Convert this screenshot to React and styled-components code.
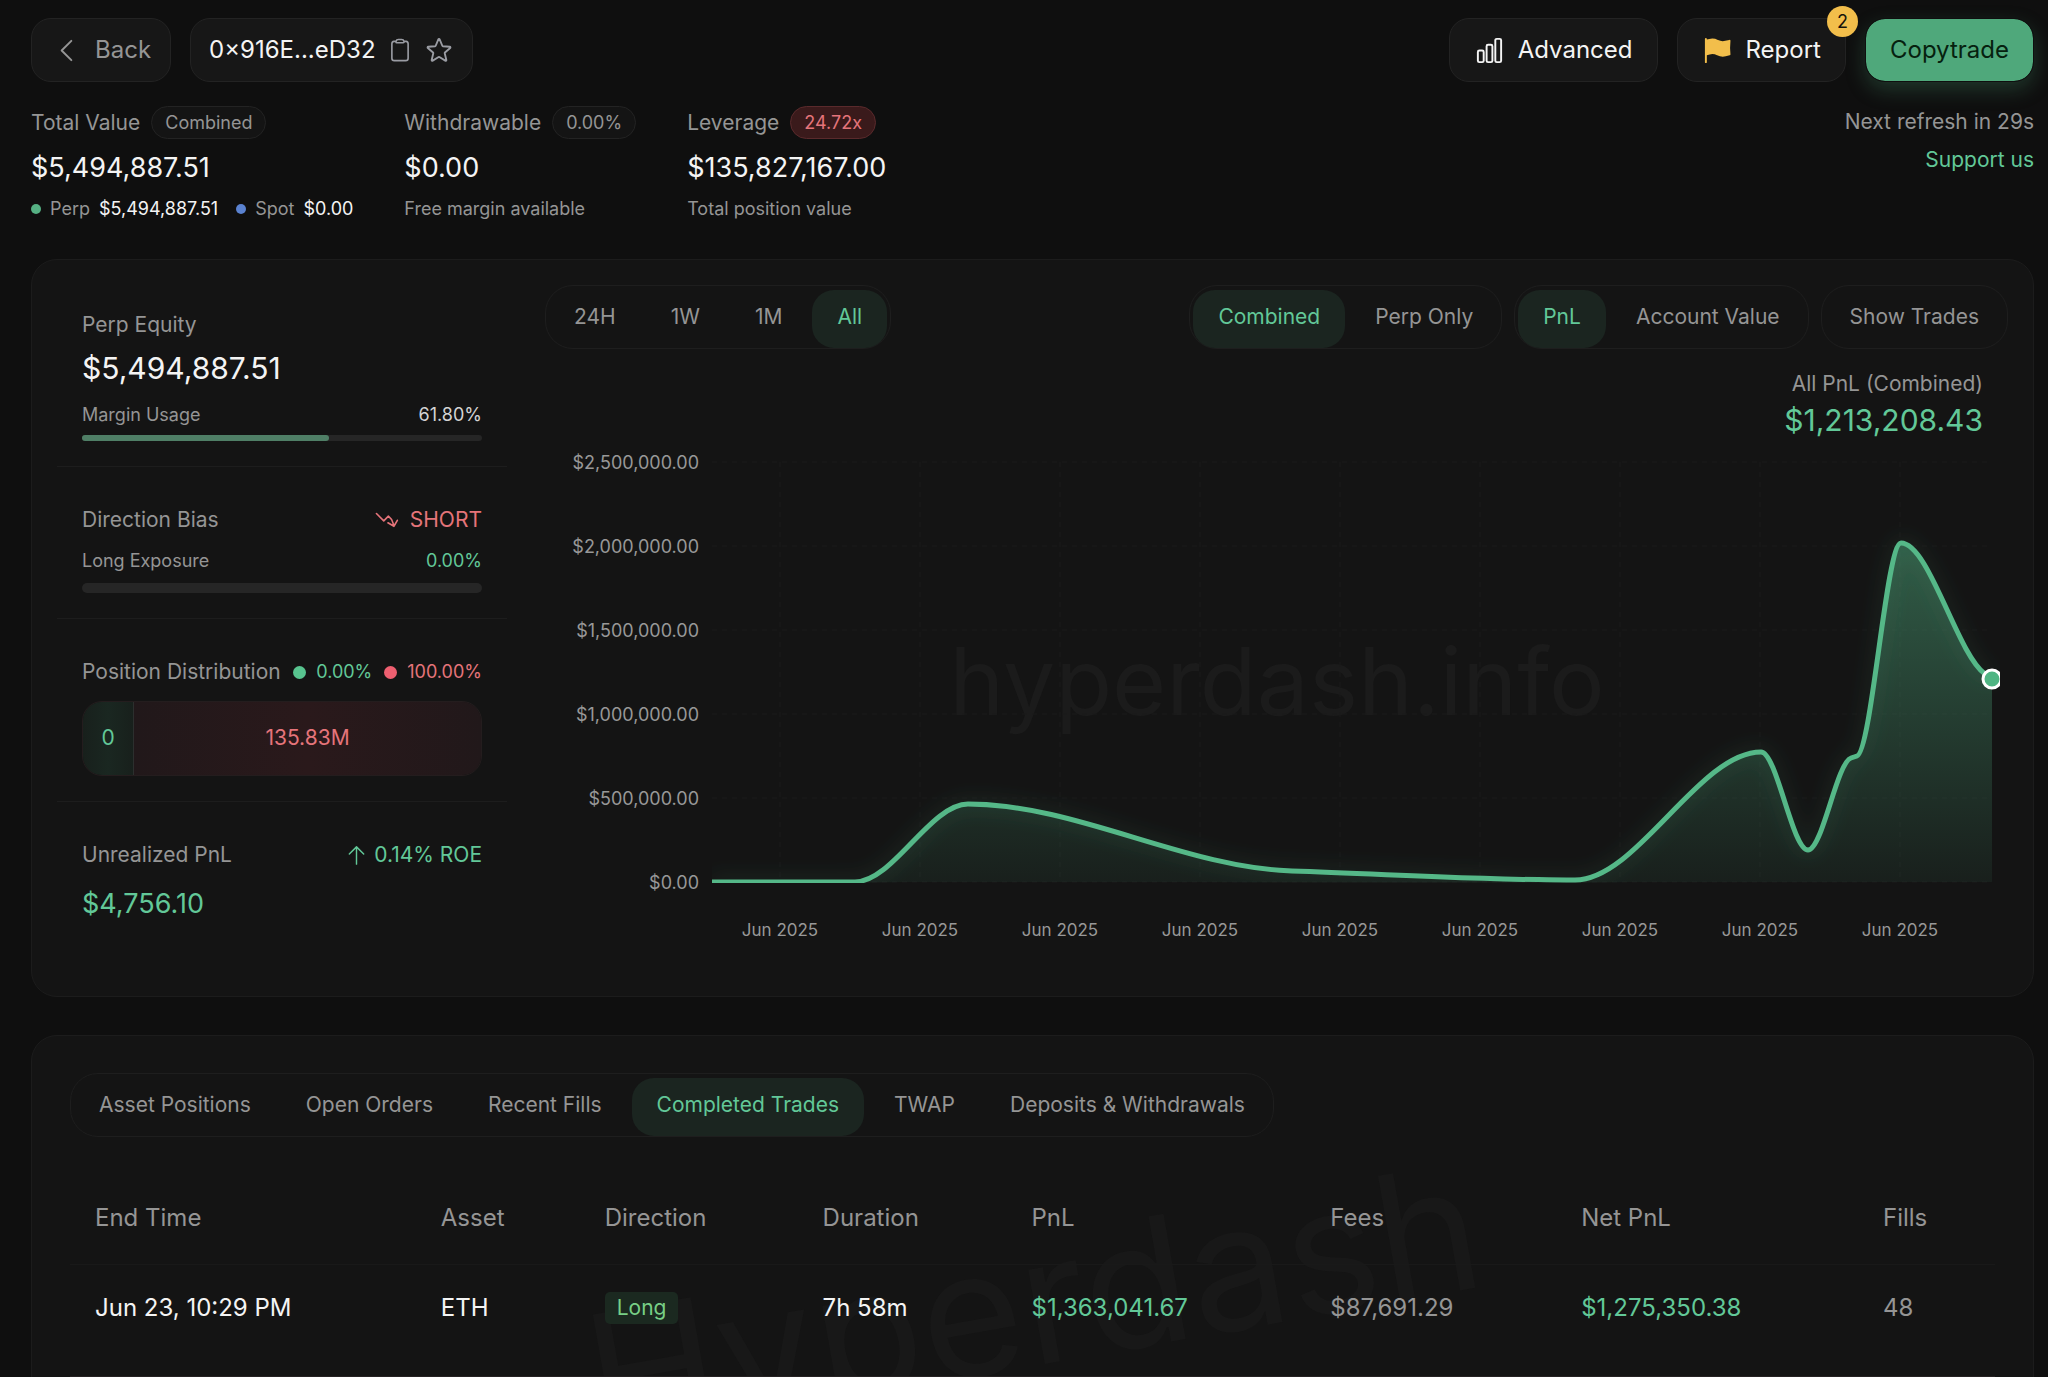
import React, { useState } from 'react';
import styled, { createGlobalStyle, css } from 'styled-components';
import {
  HiFlag,
  HiOutlineArrowTrendingDown,
  HiOutlineArrowUp,
  HiOutlineChartBar,
  HiOutlineChevronLeft,
  HiOutlineClipboard,
  HiOutlineStar,
} from 'react-icons/hi2';

const GlobalStyle = createGlobalStyle`
  * {
    box-sizing: border-box;
  }

  body {
    margin: 0;
    background: #0f0f0f;
    color: #f4f4f4;
    font-family: Inter, 'Liberation Sans', sans-serif;
    font-size: 21px;
    line-height: 28px;
  }

  button {
    font: inherit;
    color: inherit;
    cursor: pointer;
  }
`;

const tones = {
  muted: '#959595',
  light: '#d4d4d4',
  white: '#f4f4f4',
  green: '#62c898',
  red: '#e5747a',
};

const Page = styled.main`
  display: flex;
  flex-direction: column;
  gap: 38px;
  height: 100vh;
  overflow: hidden;
  padding: 18px 14px 0 31px;
`;

const TopArea = styled.div`
  display: flex;
  flex-direction: column;
  gap: 24px;
`;

const Header = styled.header`
  display: flex;
  justify-content: space-between;
`;

const HeaderGroup = styled.div`
  display: flex;
  gap: 19px;
`;

const panelButton = css`
  position: relative;
  display: flex;
  align-items: center;
  gap: 13px;
  height: 64px;
  border: 1px solid #232323;
  border-radius: 20px;
  background: #171717;
  font-size: 24px;
`;

const BackButton = styled.button`
  ${panelButton}
  padding: 0 19px;
  color: ${tones.muted};
`;

const AddressBox = styled.div`
  ${panelButton}
  gap: 11px;
  padding: 0 18px;
`;

const IconButton = styled.button`
  display: flex;
  padding: 0;
  border: 0;
  background: none;
  color: #9a9ca3;
`;

const ActionButton = styled.button`
  ${panelButton}
  padding: 0 24px;
`;

const CopytradeButton = styled(ActionButton)`
  border-color: #0f0f0f;
  background: #4fa87b;
  background-clip: padding-box;
  color: #06210f;
  box-shadow: 0 8px 20px rgba(79, 168, 123, 0.25);
`;

const CountBadge = styled.span`
  position: absolute;
  top: -13px;
  right: -13px;
  width: 31px;
  height: 31px;
  border-radius: 50%;
  background: #f2be4b;
  color: #17130a;
  font-size: 18px;
  line-height: 31px;
  text-align: center;
`;

const StatsRow = styled.section`
  display: flex;
  gap: 51px;
`;

const Stat = styled.div`
  display: flex;
  flex-direction: column;
  gap: 11px;
`;

const StatHead = styled.div`
  display: flex;
  align-items: center;
  gap: 11px;
  height: 33px;
  color: ${tones.muted};
`;

const Chip = styled.span`
  padding: 0 13px;
  border: 1px solid ${props => (props.$danger ? '#5a2a2c' : '#232323')};
  border-radius: 17px;
  background: ${props => (props.$danger ? '#3a1a1b' : '#141414')};
  color: ${props => (props.$danger ? tones.red : tones.muted)};
  font-size: 18px;
  line-height: 31px;
`;

const StatValue = styled.div`
  font-size: 27px;
  line-height: 36px;
`;

const StatNote = styled.div`
  display: flex;
  align-items: center;
  gap: 10px;
  color: ${tones.muted};
  font-size: 18px;
  line-height: 24px;
`;

const StatPart = styled.span`
  display: flex;
  align-items: center;
  gap: 9px;
  margin-right: 8px;

  &:last-child {
    margin-right: 0;
  }

  strong {
    color: ${tones.white};
    font-weight: 400;
  }
`;

const Dot = styled.i`
  width: ${props => props.$size}px;
  height: ${props => props.$size}px;
  border-radius: 50%;
  background: ${props => props.$color};
`;

const RefreshInfo = styled.div`
  display: flex;
  flex-direction: column;
  align-items: flex-end;
  gap: 10px;
  margin-left: auto;
  padding-top: 2px;
  color: ${tones.muted};
`;

const SupportLink = styled.a`
  color: ${tones.green};
  text-decoration: none;
`;

const Card = styled.section`
  position: relative;
  flex: none;
  border: 1px solid #1c1c1c;
  border-radius: 26px;
  background: #141414;
`;

const OverviewCard = styled(Card)`
  display: flex;
  gap: 38px;
  padding: 25px;
`;

const Sidebar = styled.aside`
  flex: none;
  width: 450px;
`;

const SideSection = styled.div`
  display: flex;
  flex-direction: column;
  padding: 39px 25px 25px;
  border-bottom: 1px solid #1d1d1d;

  &:first-child {
    padding-top: 26px;
  }

  &:last-child {
    border-bottom: 0;
  }
`;

const Row = styled.div`
  display: flex;
  align-items: center;
  justify-content: space-between;
  color: ${tones.muted};
`;

const SmallRow = styled(Row)`
  margin: 15px 0 ${props => props.$gap}px;
  font-size: 18px;
  line-height: 24px;
`;

const Tone = styled.span`
  display: flex;
  align-items: center;
  gap: ${props => props.$gap || 10}px;
  color: ${props => tones[props.$tone]};
`;

const BigValue = styled.div`
  margin-top: 9px;
  font-size: 30px;
  line-height: 40px;
`;

const PnlValue = styled.div`
  margin-top: 17px;
  color: ${tones.green};
  font-size: 27px;
  line-height: 36px;
`;

const Track = styled.div`
  height: ${props => props.$height}px;
  border-radius: 5px;
  background: #262626;
`;

const Fill = styled.div`
  height: 100%;
  border-radius: 5px;
  background: #4f7f66;
`;

const Legend = styled.div`
  display: flex;
  gap: 12px;
  font-size: 18px;
`;

const Distribution = styled.div`
  display: flex;
  height: 75px;
  margin-top: 15px;
  border: 1px solid #241d1e;
  border-radius: 20px;
  overflow: hidden;
  line-height: 72px;
  text-align: center;
`;

const LongShare = styled.div`
  width: 51px;
  border-right: 1px solid #2c2f2e;
  background: linear-gradient(90deg, #18201c, #1a2721, #18201c);
  color: ${tones.green};
`;

const ShortShare = styled.div`
  flex: 1;
  background: linear-gradient(90deg, #21181a, #2a191b, #21181a);
  color: ${tones.red};
`;

const ChartColumn = styled.div`
  flex: 1;
  min-width: 0;
`;

const Toolbar = styled.div`
  display: flex;
  gap: 12px;
  height: 64px;

  > :first-child {
    margin-right: auto;
  }
`;

const Segments = styled.div`
  display: flex;
  gap: 5px;
  width: fit-content;
  height: 64px;
  padding: 4px 3px 0;
  border: 1px solid #1e1e1e;
  border-radius: 28px;
`;

const Segment = styled.button`
  padding: 0 25px 4px;
  border: 0;
  border-radius: 22px;
  background: ${props => (props.$active ? '#1b2520' : 'transparent')};
  color: ${props => (props.$active ? tones.green : tones.muted)};
  white-space: nowrap;
`;

const Readout = styled.div`
  display: flex;
  flex-direction: column;
  align-items: flex-end;
  gap: 2px;
  padding: 21px 25px 0 0;
  color: ${tones.muted};

  strong {
    color: ${tones.green};
    font-size: 30px;
    font-weight: 400;
    line-height: 40px;
  }
`;

const ChartSvg = styled.svg`
  display: block;
  width: 100%;
  height: auto;

  text {
    fill: #989898;
    font-size: 18px;
  }

  .date {
    font-size: 17px;
  }

  .watermark {
    fill: #1b1b1b;
    font-size: 93px;
  }
`;

const TradesCard = styled(Card)`
  padding: 37px 38px;
  overflow: hidden;
`;

const TradesWatermark = styled.div`
  position: absolute;
  top: 165px;
  left: 50%;
  color: #181818;
  font-size: 175px;
  line-height: 200px;
  transform: translateX(-50%) rotate(-10deg);
  pointer-events: none;
`;

const Table = styled.table`
  position: relative;
  width: 100%;
  margin-top: 35px;
  border-collapse: collapse;
  table-layout: fixed;
  font-size: 24px;

  th,
  td {
    padding: 0 25px;
    border-bottom: 1px solid #191919;
    font-weight: 400;
    text-align: left;
    white-space: nowrap;
  }

  th {
    height: 92px;
    color: ${tones.muted};
  }

  td {
    height: 112px;
    padding-bottom: 25px;
    border-bottom-color: #262223;
  }
`;

const Cell = styled.td`
  color: ${props => tones[props.$tone]};
`;

const DirectionTag = styled.span`
  display: inline-block;
  padding: 0 12px;
  border-radius: 5px;
  background: #1b2920;
  color: #78cf86;
  font-size: 21px;
  line-height: 32px;
`;

function SegmentedControl({ options, initial }) {
  const [selected, setSelected] = useState(initial);

  return (
    <Segments>
      {options.map(option => (
        <Segment
          key={option}
          $active={option === selected}
          aria-pressed={option === selected}
          onClick={() => setSelected(option)}
        >
          {option}
        </Segment>
      ))}
    </Segments>
  );
}

const pnlPoints = [
  [167, 442],
  [310, 442],
  [423, 364],
  [747, 431],
  [1030, 440],
  [1216, 312],
  [1263, 410],
  [1306, 318],
  [1312, 316],
  [1356, 103],
  [1440, 234],
  [1447, 239],
];

const yTicks = ['$2,500,000.00', '$2,000,000.00', '$1,500,000.00', '$1,000,000.00', '$500,000.00', '$0.00'];
const xTicks = Array.from({ length: 9 }, (_, i) => 235 + i * 140);

// monotone cubic through the points, so the line never overshoots a value
function monotonePath(points) {
  const secants = points.slice(1).map(([x, y], i) => (y - points[i][1]) / (x - points[i][0]));
  const slopes = points.map((_, i) => {
    if (i === 0) return secants[0];
    if (i === points.length - 1) return secants[i - 1];
    const before = secants[i - 1];
    const after = secants[i];
    if (before * after <= 0) return 0;
    return Math.sign(before) * Math.min(Math.abs(before), Math.abs(after));
  });

  return points.slice(1).reduce((path, [x, y], i) => {
    const [px, py] = points[i];
    const third = (x - px) / 3;
    return `${path}C${px + third},${py + third * slopes[i]} ${x - third},${y - third * slopes[i + 1]} ${x},${y}`;
  }, `M${points[0][0]},${points[0][1]}`);
}

function PnlChart() {
  const line = monotonePath(pnlPoints);

  return (
    <ChartSvg viewBox="0 0 1463 531" role="img" aria-label="All PnL (Combined)">
      <defs>
        <linearGradient id="pnlFill" x1="0" y1="103" x2="0" y2="442" gradientUnits="userSpaceOnUse">
          <stop offset="0" stopColor="#55b888" stopOpacity="0.44" />
          <stop offset="1" stopColor="#55b888" stopOpacity="0.07" />
        </linearGradient>
        <clipPath id="plotClip">
          <rect x="167" y="0" width="1288" height="443" />
        </clipPath>
        <filter id="lineGlow" x="-10%" y="-20%" width="120%" height="140%">
          <feDropShadow dx="0" dy="0" stdDeviation="10" floodColor="#55b888" floodOpacity="0.25" />
        </filter>
      </defs>

      <text className="watermark" x="732" y="275" textAnchor="middle">hyperdash.info</text>

      {yTicks.map((label, i) => (
        <g key={label}>
          <line x1="167" x2="1447" y1={22 + i * 84} y2={22 + i * 84} stroke="#1b1b1b" strokeDasharray="5 5" />
          <text x="154" y={29 + i * 84} textAnchor="end">{label}</text>
        </g>
      ))}
      {xTicks.map(x => (
        <g key={x}>
          <line x1={x} x2={x} y1="22" y2="442" stroke="#1b1b1b" strokeDasharray="5 5" />
          <text className="date" x={x} y="496" textAnchor="middle">Jun 2025</text>
        </g>
      ))}

      <g clipPath="url(#plotClip)">
        <path d={`${line}L1447,442L167,442Z`} fill="url(#pnlFill)" />
        <path d={line} fill="none" stroke="#55b888" strokeWidth="5" filter="url(#lineGlow)" />
        <circle cx="1447" cy="239" r="9" fill="#4fb583" stroke="#fff" strokeWidth="3" />
      </g>
    </ChartSvg>
  );
}

const columns = [
  ['End Time', 346],
  ['Asset', 164],
  ['Direction', 218],
  ['Duration', 209],
  ['PnL', 299],
  ['Fees', 251],
  ['Net PnL', 302],
  ['Fills', 137],
];
const totalWidth = columns.reduce((sum, [, width]) => sum + width, 0);

const trades = [
  {
    endTime: 'Jun 23, 10:29 PM',
    asset: 'ETH',
    direction: 'Long',
    duration: '7h 58m',
    pnl: '$1,363,041.67',
    fees: '$87,691.29',
    netPnl: '$1,275,350.38',
    fills: 48,
  },
];

function TradesTable() {
  return (
    <Table>
      <colgroup>
        {columns.map(([name, width]) => (
          <col key={name} style={{ width: `${(width / totalWidth) * 100}%` }} />
        ))}
      </colgroup>
      <thead>
        <tr>
          {columns.map(([name]) => (
            <th key={name} scope="col">{name}</th>
          ))}
        </tr>
      </thead>
      <tbody>
        {trades.map(trade => (
          <tr key={trade.endTime}>
            <Cell $tone="white">{trade.endTime}</Cell>
            <Cell $tone="white">{trade.asset}</Cell>
            <Cell $tone="green"><DirectionTag>{trade.direction}</DirectionTag></Cell>
            <Cell $tone="white">{trade.duration}</Cell>
            <Cell $tone="green">{trade.pnl}</Cell>
            <Cell $tone="muted">{trade.fees}</Cell>
            <Cell $tone="green">{trade.netPnl}</Cell>
            <Cell $tone="muted">{trade.fills}</Cell>
          </tr>
        ))}
      </tbody>
    </Table>
  );
}

function App() {
  const marginUsage = 61.8;

  return (
    <>
      <GlobalStyle />
      <Page>
        <TopArea>
          <Header>
            <HeaderGroup>
              <BackButton>
                <HiOutlineChevronLeft size={31} />
                Back
              </BackButton>
              <AddressBox>
                0×916E...eD32
                <IconButton aria-label="Copy address"><HiOutlineClipboard size={26} /></IconButton>
                <IconButton aria-label="Add to favourites"><HiOutlineStar size={30} /></IconButton>
              </AddressBox>
            </HeaderGroup>
            <HeaderGroup>
              <ActionButton>
                <HiOutlineChartBar size={31} />
                Advanced
              </ActionButton>
              <ActionButton>
                <HiFlag size={31} color="#f2be4b" />
                Report
                <CountBadge>2</CountBadge>
              </ActionButton>
              <CopytradeButton>Copytrade</CopytradeButton>
            </HeaderGroup>
          </Header>

          <StatsRow>
            <Stat>
              <StatHead>Total Value <Chip>Combined</Chip></StatHead>
              <StatValue>$5,494,887.51</StatValue>
              <StatNote>
                <StatPart><Dot $size={10} $color="#55b083" />Perp <strong>$5,494,887.51</strong></StatPart>
                <StatPart><Dot $size={10} $color="#5a82d0" />Spot <strong>$0.00</strong></StatPart>
              </StatNote>
            </Stat>
            <Stat>
              <StatHead>Withdrawable <Chip>0.00%</Chip></StatHead>
              <StatValue>$0.00</StatValue>
              <StatNote>Free margin available</StatNote>
            </Stat>
            <Stat>
              <StatHead>Leverage <Chip $danger>24.72x</Chip></StatHead>
              <StatValue>$135,827,167.00</StatValue>
              <StatNote>Total position value</StatNote>
            </Stat>
            <RefreshInfo>
              <span>Next refresh in 29s</span>
              <SupportLink href="#support">Support us</SupportLink>
            </RefreshInfo>
          </StatsRow>
        </TopArea>

        <OverviewCard>
          <Sidebar>
            <SideSection>
              <Row>Perp Equity</Row>
              <BigValue>$5,494,887.51</BigValue>
              <SmallRow $gap={8}>Margin Usage <Tone $tone="light">61.80%</Tone></SmallRow>
              <Track $height={6}><Fill style={{ width: `${marginUsage}%` }} /></Track>
            </SideSection>
            <SideSection>
              <Row>
                Direction Bias
                <Tone $tone="red"><HiOutlineArrowTrendingDown size={26} />SHORT</Tone>
              </Row>
              <SmallRow $gap={10}>Long Exposure <Tone $tone="green">0.00%</Tone></SmallRow>
              <Track $height={10} />
            </SideSection>
            <SideSection>
              <Row>
                Position Distribution
                <Legend>
                  <Tone $tone="green"><Dot $size={13} $color="#58c48f" />0.00%</Tone>
                  <Tone $tone="red"><Dot $size={13} $color="#ee5f70" />100.00%</Tone>
                </Legend>
              </Row>
              <Distribution>
                <LongShare>0</LongShare>
                <ShortShare>135.83M</ShortShare>
              </Distribution>
            </SideSection>
            <SideSection>
              <Row>
                Unrealized PnL
                <Tone $tone="green" $gap={6}><HiOutlineArrowUp size={23} />0.14% ROE</Tone>
              </Row>
              <PnlValue>$4,756.10</PnlValue>
            </SideSection>
          </Sidebar>

          <ChartColumn>
            <Toolbar>
              <SegmentedControl options={['24H', '1W', '1M', 'All']} initial="All" />
              <SegmentedControl options={['Combined', 'Perp Only']} initial="Combined" />
              <SegmentedControl options={['PnL', 'Account Value']} initial="PnL" />
              <SegmentedControl options={['Show Trades']} />
            </Toolbar>
            <Readout>
              All PnL (Combined)
              <strong>$1,213,208.43</strong>
            </Readout>
            <PnlChart />
          </ChartColumn>
        </OverviewCard>

        <TradesCard>
          <TradesWatermark aria-hidden="true">Hyperdash</TradesWatermark>
          <SegmentedControl
            options={[
              'Asset Positions',
              'Open Orders',
              'Recent Fills',
              'Completed Trades',
              'TWAP',
              'Deposits & Withdrawals',
            ]}
            initial="Completed Trades"
          />
          <TradesTable />
        </TradesCard>
      </Page>
    </>
  );
}

export default App;
